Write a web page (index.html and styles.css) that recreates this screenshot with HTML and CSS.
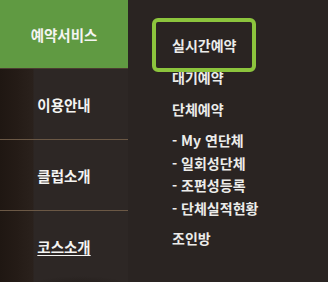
FILE: index.html
```html
<!DOCTYPE html>
<html lang="ko">
<head>
<meta charset="utf-8">
<title>예약서비스</title>
<link rel="stylesheet" href="styles.css">
</head>
<body>
<div class="page">
  <nav class="gnb">
    <a class="gnb-item active" href="#">예약서비스</a>
    <a class="gnb-item" href="#">이용안내</a>
    <a class="gnb-item" href="#">클럽소개</a>
    <a class="gnb-item last" href="#"><span class="ul">코스소개</span></a>
  </nav>
  <div class="sub">
    <ul class="sub-list">
      <li class="main"><a class="focus" href="#">실시간예약</a></li>
      <li class="main"><a href="#">대기예약</a></li>
      <li class="main"><a href="#">단체예약</a>
        <ul class="depth">
          <li><a href="#">- My 연단체</a></li>
          <li><a href="#">- 일회성단체</a></li>
          <li><a href="#">- 조편성등록</a></li>
          <li><a href="#">- 단체실적현황</a></li>
        </ul>
      </li>
      <li class="main join"><a href="#">조인방</a></li>
    </ul>
  </div>
</div>
</body>
</html>
```
FILE: styles.css
```css
html, body {
  margin: 0;
  padding: 0;
  width: 328px;
  height: 282px;
  overflow: hidden;
  background: #2a2422;
  font-family: "Noto Sans CJK KR", "Noto Sans", sans-serif;
}
a { text-decoration: none; color: inherit; }
ul { list-style: none; margin: 0; padding: 0; }

.page {
  display: flex;
  height: 282px;
}

.gnb {
  width: 128px;
  flex: none;
  display: flex;
  flex-direction: column;
  background:
    radial-gradient(ellipse 60px 14px at 80px 290px, rgba(20,14,10,0.55), rgba(20,14,10,0) 100%),
    linear-gradient(to right, #1f1712 0, #241b16 16px, #2a211c 33px, #2d2725 34px, #2d2725 100%);
}
.gnb-item {
  height: 70px;
  flex: none;
  display: flex;
  align-items: center;
  justify-content: center;
  color: #f4f4f2;
  font-size: 14.5px;
  font-weight: 700;
  border-bottom: 1px solid #6b5845;
}
.gnb-item.active {
  height: 68px;
  background: #609a42;
  border-bottom-color: #4b3c30;
}
.gnb-item.last {
  flex: 1;
  border-bottom: 0;
}
.ul {
  text-decoration: underline;
  text-underline-offset: 2px;
}

.sub {
  flex: 1;
  padding: 29px 0 0 44px;
  color: #ececea;
  font-size: 14px;
  font-weight: 700;
}
.main {
  line-height: 32px;
}
.depth {
  margin-top: 4px;
}
.depth li {
  line-height: 22.5px;
}
.join {
  margin-top: 3px;
}
.focus {
  position: relative;
  display: inline-block;
}
.focus::after {
  content: "";
  position: absolute;
  left: -20px;
  right: -20px;
  top: -11px;
  bottom: -11px;
  border: 4px solid #8cc43d;
  border-radius: 6px;
}
```
